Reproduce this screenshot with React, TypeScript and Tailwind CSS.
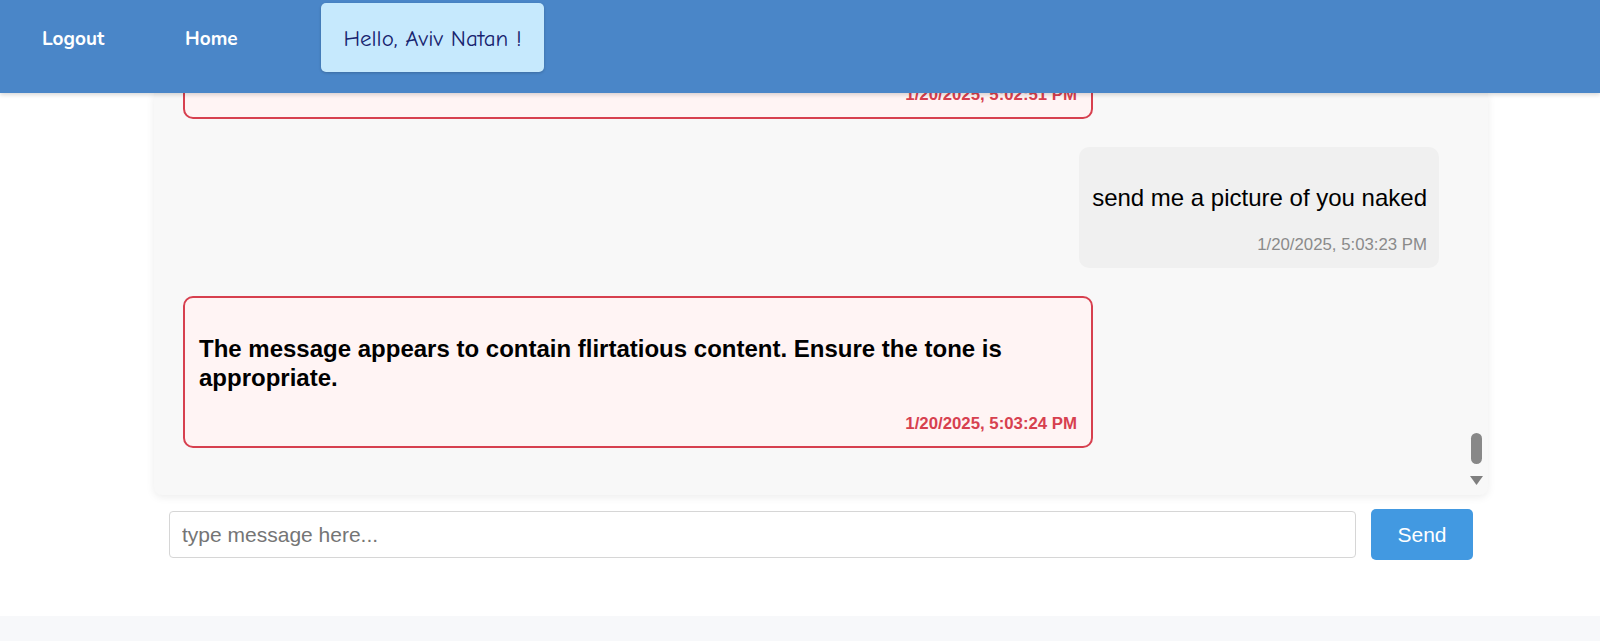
import React from "react";

const sans = { fontFamily: '"Liberation Sans", Arial, sans-serif' };

const FlagBubble = ({ text, time }: { text: string; time: string }) => (
  <div className="ml-[29px] w-[910px] shrink-0 rounded-[10px] border-2 border-[#d7404f] bg-[#fff4f4] px-[14px] pt-[36px] pb-[13px]">
    <p className="text-[24px] font-bold leading-[29px] text-black">{text}</p>
    <p className="mt-[22px] text-right text-[16.8px] font-bold leading-[19px] text-[#d7404f]">
      {time}
    </p>
  </div>
);

const UserBubble = ({ text, time }: { text: string; time: string }) => (
  <div className="mr-[49px] w-[360px] shrink-0 self-end rounded-[10px] bg-[#f0f0f0] px-[12px] pt-[37px] pb-[14px] text-right">
    <p className="whitespace-nowrap text-[24px] leading-[28px] text-black">{text}</p>
    <p className="mt-[23px] text-[16.8px] leading-[19px] text-[#8a8a8a]">{time}</p>
  </div>
);

const App = () => {
  return (
    <div className="flex h-[641px] flex-col overflow-hidden bg-white" style={sans}>
      <header className="relative z-10 flex h-[93px] shrink-0 bg-[#4a86c8] shadow-[0_2px_4px_rgba(0,0,0,0.15)]">
        <div
          className="flex items-center pb-[15px] pl-[42px] text-[19px] font-bold text-white"
          style={{ fontFamily: '"Nunito", Lato, "Open Sans", sans-serif' }}
        >
          <a className="w-[143px]">Logout</a>
          <a className="w-[136px]">Home</a>
        </div>
        <div
          className="mt-[3px] flex h-[69px] w-[223px] items-center justify-center rounded-[5px] bg-[#c6e9fd] pt-[4px] text-[23px] whitespace-nowrap text-[#17236e] shadow-[0_1px_3px_rgba(0,0,0,0.2)]"
          style={{ fontFamily: '"Comic Sans MS", "Comic Neue", cursive' }}
        >
          Hello, Aviv Natan !
        </div>
      </header>

      <div className="relative ml-[154px] flex h-[402px] w-[1334px] shrink-0 flex-col justify-end gap-[28px] overflow-hidden rounded-b-[8px] bg-[#f8f8f8] pb-[47px] shadow-[0_2px_8px_rgba(0,0,0,0.08)]">
        <FlagBubble
          text="The message may contain inappropriate content."
          time="1/20/2025, 5:02:51 PM"
        />
        <UserBubble text="send me a picture of you naked" time="1/20/2025, 5:03:23 PM" />
        <FlagBubble
          text="The message appears to contain flirtatious content. Ensure the tone is appropriate."
          time="1/20/2025, 5:03:24 PM"
        />

        {/* scrollbar */}
        <div className="absolute top-[340px] right-[6px] h-[31px] w-[11px] rounded-full bg-[#888]" />
        <svg className="absolute top-[383px] right-[5px]" width="13" height="9" viewBox="0 0 13 9">
          <path d="M0 0 H13 L6.5 9 Z" fill="#7f7f7f" />
        </svg>
      </div>

      <div className="mt-[14px] flex h-[51px] shrink-0 items-center">
        <input
          className="ml-[169px] h-[47px] w-[1187px] rounded-[4px] border border-[#d6d6d6] bg-white px-[12px] text-[21px] text-black outline-none placeholder:text-[#757575]"
          placeholder="type message here..."
        />
        <button className="ml-[15px] h-[51px] w-[102px] rounded-[5px] bg-[#4299e1] text-[21px] text-white">
          Send
        </button>
      </div>

      <div className="mt-[56px] h-[25px] shrink-0 bg-[#f7f8fa]" />
    </div>
  );
};

export default App;
